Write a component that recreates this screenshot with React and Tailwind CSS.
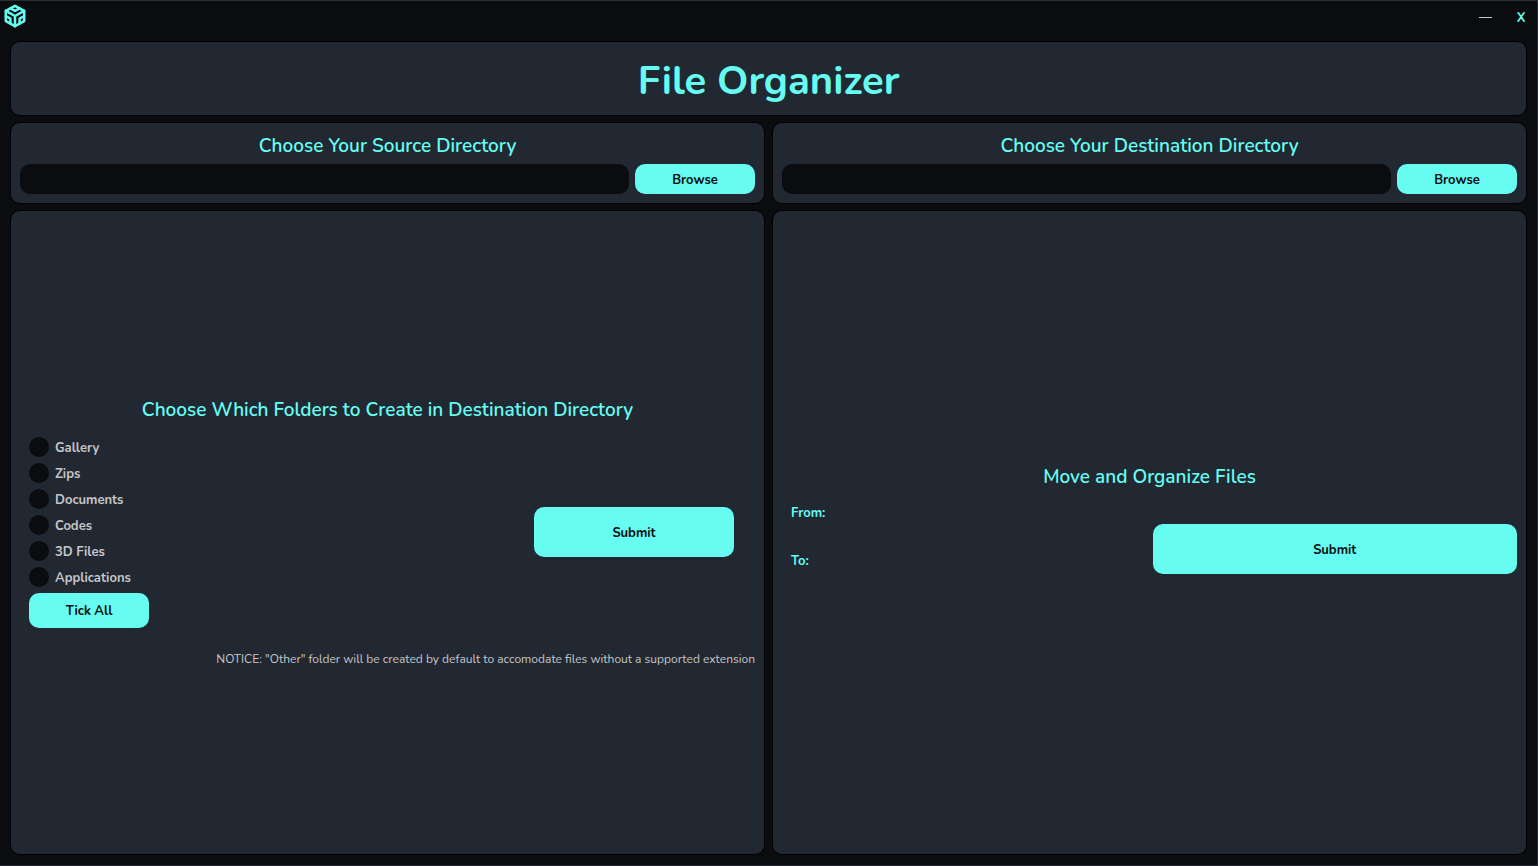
import React from "react";

const folders = ["Gallery", "Zips", "Documents", "Codes", "3D Files", "Applications"];

function Logo() {
  return (
    <svg
      className="mt-[3px] ml-1 h-6 w-[22px]"
      viewBox="0 0 22 24"
      fill="none"
      stroke="currentColor"
      strokeWidth="2.5"
      strokeLinecap="round"
      strokeLinejoin="round"
      aria-hidden="true"
    >
      <path d="M11 1.8 20.2 6.9V17.1L11 22.2 1.8 17.1V6.9Z" />
      <path d="M1.8 6.9 11 12l9.2-5.1M11 12v10.2" />
      <path d="M6.4 4.4 11 6.9l4.6-2.5M1.8 12l4.6 2.6v5M20.2 12l-4.6 2.6v5" />
    </svg>
  );
}

function Panel({ className = "", children }) {
  return (
    <section className={`rounded-[10px] border border-black bg-[#212832] ${className}`}>
      {children}
    </section>
  );
}

function ActionButton({ className = "", children }) {
  return (
    <button type="button" className={`rounded-[10px] bg-[#66fcf1] pt-1 text-[13px] font-bold text-[#0b0c10] ${className}`}>
      {children}
    </button>
  );
}

function DirectoryPicker({ id, label }) {
  return (
    <Panel className="flex flex-col p-[9px]">
      <label htmlFor={id} className="h-8 text-center text-[19px] leading-7 font-semibold">
        {label}
      </label>
      <div className="flex gap-1.5">
        <input id={id} type="text" className="h-[30px] min-w-0 flex-1 rounded-[10px] bg-[#0b0c10] px-3 text-[13px] outline-none" />
        <ActionButton className="h-[30px] w-[120px]">Browse</ActionButton>
      </div>
    </Panel>
  );
}

export default function App() {
  return (
    <div className="flex min-h-screen flex-col border-t border-r border-b border-[#2a2c36] bg-[#0b0c10] font-[Nunito,'Open_Sans',sans-serif] text-[#66fcf1]">
      <header className="flex h-10 items-start justify-between">
        <Logo />
        <div className="flex h-8 items-center gap-1">
          <button type="button" aria-label="Minimize" className="flex h-8 w-8 items-center justify-center text-[#c5c6c7]">
            <svg width="13" height="1" viewBox="0 0 13 1" aria-hidden="true">
              <path d="M0 0.5H13" stroke="currentColor" strokeWidth="1" />
            </svg>
          </button>
          <button type="button" aria-label="Close" className="h-8 w-8 pt-1 text-[13px] font-bold">X</button>
        </div>
      </header>
      <main className="flex flex-1 flex-col gap-1.5 px-[10px] pb-[10px]">
        <Panel className="flex h-[75px] items-center justify-center pt-1">
          <h1 className="text-[40px] leading-[48px] font-bold">File Organizer</h1>
        </Panel>
        <div className="grid grid-cols-2 gap-[7px]">
          <DirectoryPicker id="source" label="Choose Your Source Directory" />
          <DirectoryPicker id="destination" label="Choose Your Destination Directory" />
        </div>
        <div className="grid flex-1 grid-cols-2 gap-[7px]">
          <Panel className="flex flex-col justify-center px-[9px] pb-px">
            <h2 className="text-center text-[19px] leading-7 font-semibold">
              Choose Which Folders to Create in Destination Directory
            </h2>
            <div className="mt-[13px] flex items-center justify-between pr-[21px] pl-[9px]">
              <div>
                <div className="flex flex-col gap-1.5">
                  {folders.map((name) => (
                    <label key={name} className="flex h-5 items-center gap-1.5 text-[13px] leading-5 font-bold text-[#c5c6c7]">
                      <input type="checkbox" className="size-5 appearance-none rounded-full bg-[#0b0c10] checked:bg-[#66fcf1]" />
                      <span className="pt-0.5">{name}</span>
                    </label>
                  ))}
                </div>
                <ActionButton className="mt-1.5 h-[35px] w-[120px]">Tick All</ActionButton>
              </div>
              <ActionButton className="h-[50px] w-[200px]">Submit</ActionButton>
            </div>
            <p className="mt-[21px] text-right text-[12px] leading-5 text-[#c5c6c7]">
              NOTICE: "Other" folder will be created by default to accomodate files without a supported extension
            </p>
          </Panel>
          <Panel className="flex flex-col justify-center px-[9px] pb-1">
            <h2 className="text-center text-[19px] leading-6 font-semibold">Move and Organize Files</h2>
            <div className="mt-3 grid grid-cols-2 items-center gap-1.5">
              <div className="grid auto-rows-[24px] pl-[9px] text-[13px] leading-6 font-bold">
                <p>From:</p>
                <output aria-label="Source path" />
                <p>To:</p>
                <output aria-label="Destination path" />
              </div>
              <ActionButton className="h-[50px]">Submit</ActionButton>
            </div>
          </Panel>
        </div>
      </main>
    </div>
  );
}
